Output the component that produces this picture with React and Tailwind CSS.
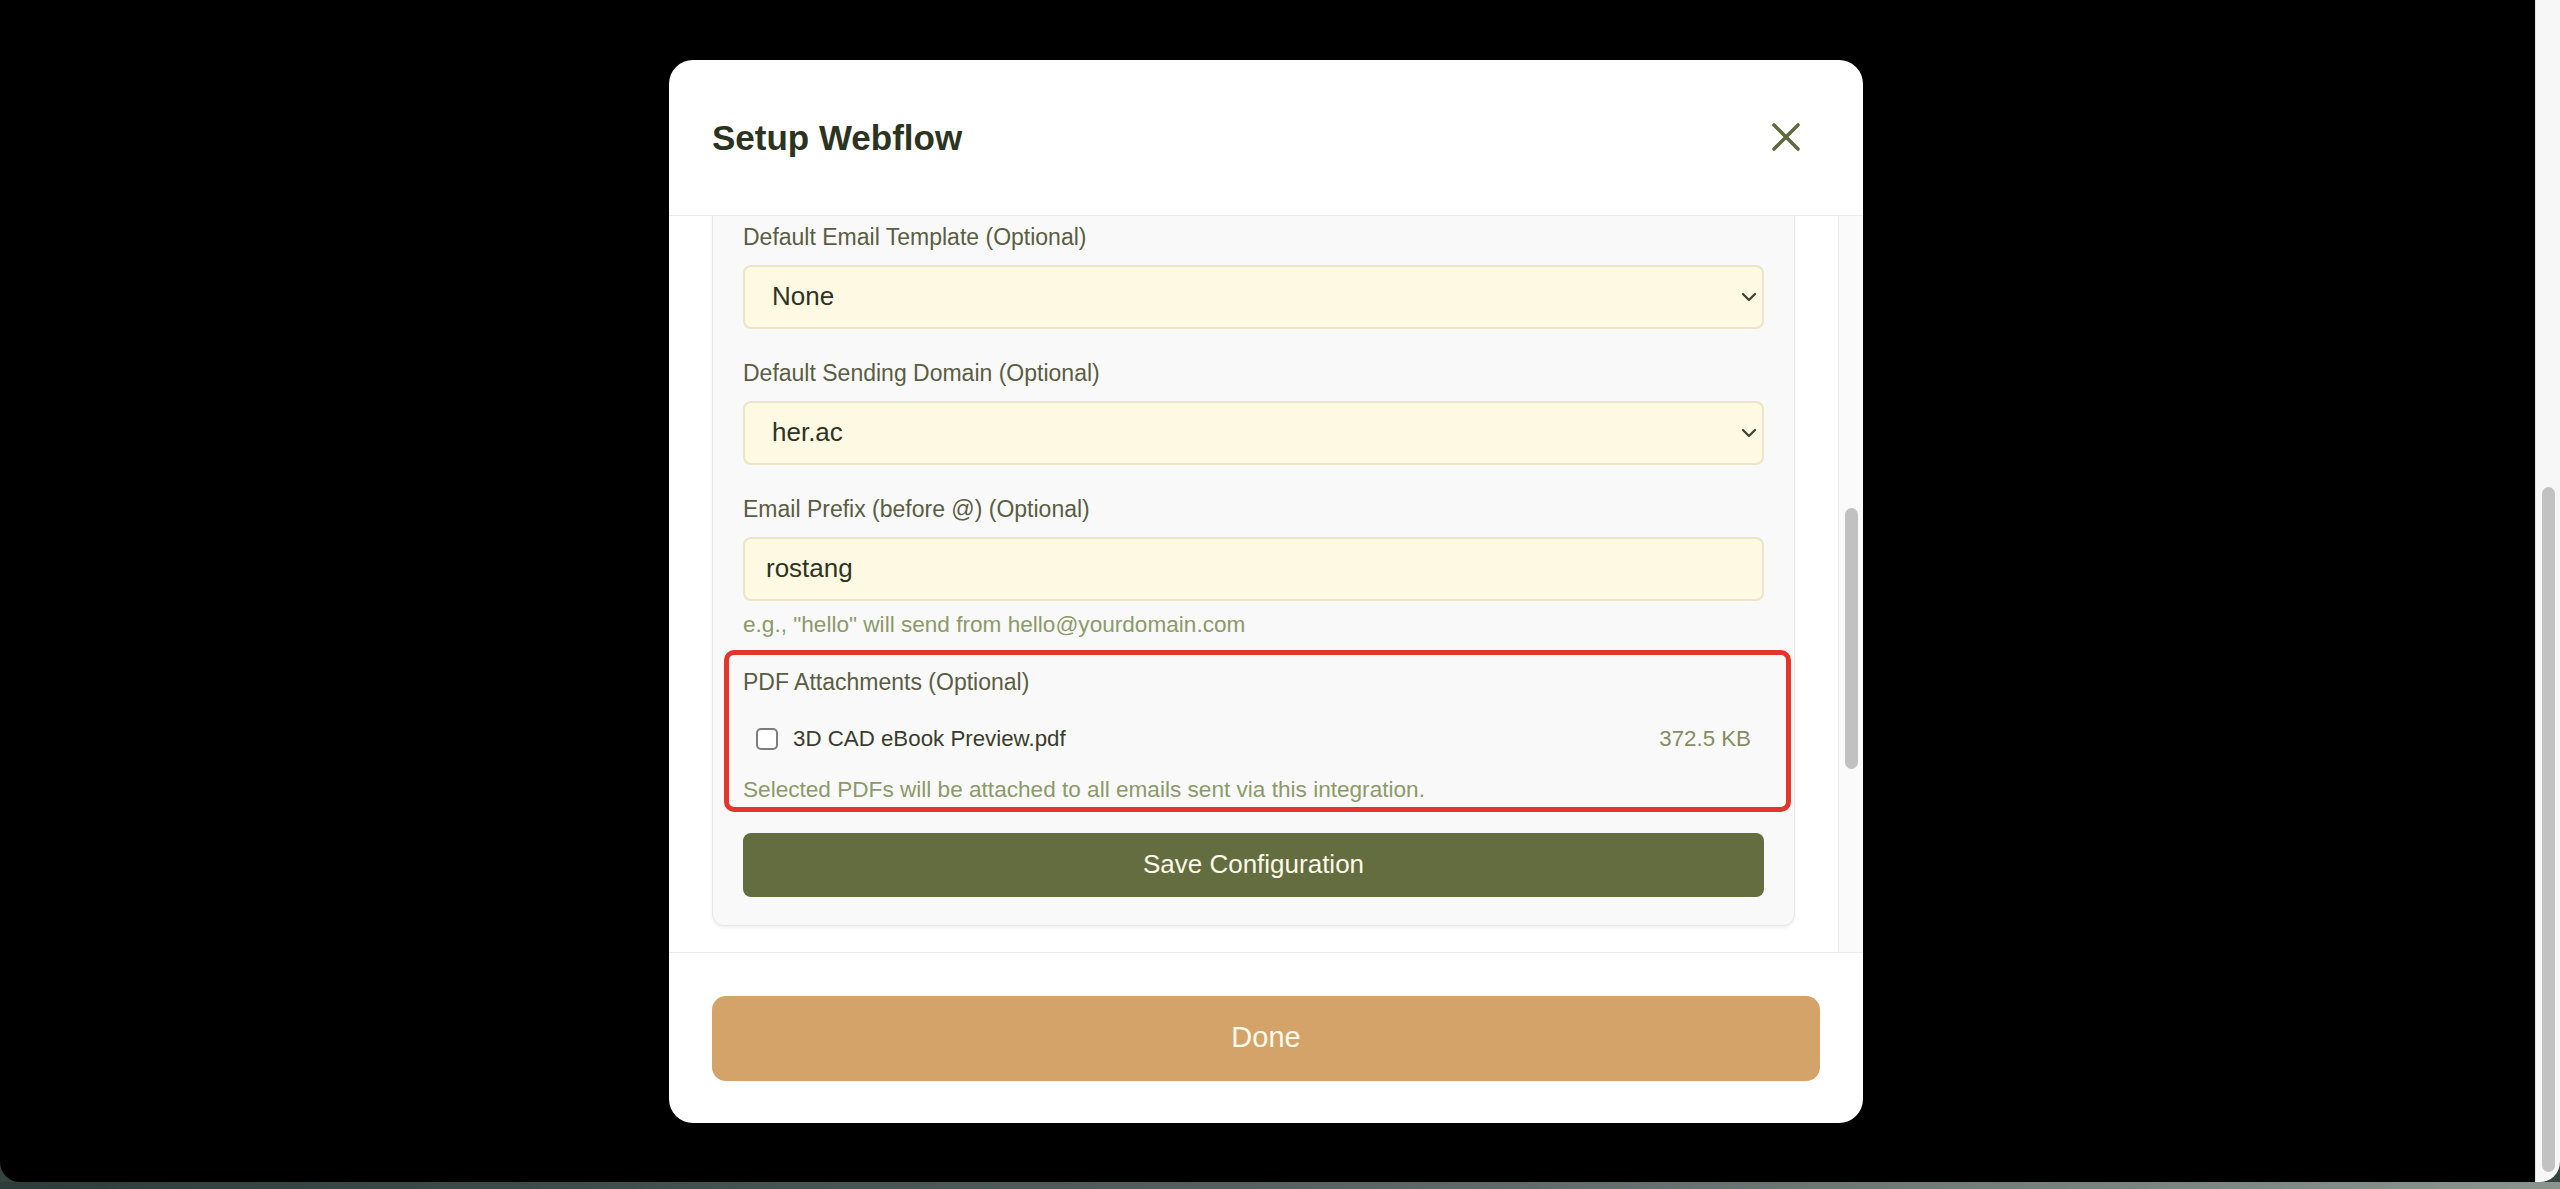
const sans = { fontFamily: '"Liberation Sans", Arial, sans-serif' };

const labelCls = "block text-[23px] font-medium leading-[32px] text-[#5a5d44]";
const hintCls = "text-[22.6px] leading-[30px] text-[#8c9a6a]";
const boxCls =
  "flex h-[64px] items-center justify-between rounded-[8px] border-2 border-[#ebe6c8] bg-[#fdf9e3] text-[26px] text-[#2f3322]";

function Chevron() {
  return (
    <svg width="16" height="10" viewBox="0 0 16 10" fill="none">
      <path d="M2 2l6 6 6-6" stroke="#3d4030" strokeWidth="2.2" strokeLinecap="round" strokeLinejoin="round" />
    </svg>
  );
}

function SelectBox({ value }) {
  return (
    <div className={`${boxCls} pl-[27px] pr-[5px]`}>
      <span>{value}</span>
      <Chevron />
    </div>
  );
}

function Field({ label, children, className = "" }) {
  return (
    <div className={`flex flex-col gap-[12px] ${className}`}>
      <label className={labelCls}>{label}</label>
      {children}
    </div>
  );
}

function SetupModal() {
  return (
    <div className="flex h-[1063px] w-[1194px] flex-col overflow-hidden rounded-[24px] bg-white">
      <div className="flex h-[156px] shrink-0 items-center justify-between border-b border-[#ececec] pl-[43px] pr-[62px]">
        <h2 className="text-[35px] font-bold leading-none text-[#2c3320]">Setup Webflow</h2>
        <svg width="30" height="30" viewBox="0 0 30 30" fill="none">
          <path d="M3 3l24 24M27 3L3 27" stroke="#5f6b3c" strokeWidth="3.6" strokeLinecap="round" />
        </svg>
      </div>

      <div className="flex min-h-0 flex-1">
        <div className="min-w-0 flex-1 overflow-hidden px-[43px] pb-[28px]">
          <div className="-mt-[20px] rounded-[12px] border border-[#e7e7e7] bg-[#f9f9f9] px-[30px] pb-[28px] pt-[24px] shadow-[0_2px_3px_rgba(0,0,0,0.06)]">
            <Field label="Default Email Template (Optional)">
              <SelectBox value="None" />
            </Field>
            <Field label="Default Sending Domain (Optional)" className="mt-[28px]">
              <SelectBox value="her.ac" />
            </Field>
            <Field label="Email Prefix (before @) (Optional)" className="mt-[28px]">
              <div className={`${boxCls} px-[21px]`}>rostang</div>
            </Field>
            <p className={`mt-[9px] ${hintCls}`}>e.g., "hello" will send from hello@yourdomain.com</p>

            <div className="-ml-[19px] -mr-[27px] mt-[10px] rounded-[10px] border-[5px] border-[#e3352c] pb-[2px] pl-[14px] pr-[22px] pt-[11px]">
              <label className={labelCls}>PDF Attachments (Optional)</label>
              <div className="mt-[19px] flex h-[44px] items-center justify-between px-[13px]">
                <div className="flex items-center gap-[15px]">
                  <span className="h-[22px] w-[22px] rounded-[5px] border-2 border-[#7d7d7d] bg-white" />
                  <span className="text-[22.3px] text-[#3a3d2e]">3D CAD eBook Preview.pdf</span>
                </div>
                <span className="text-[22.3px] text-[#858d62]">372.5 KB</span>
              </div>
              <p className={`mt-[14px] ${hintCls}`}>
                Selected PDFs will be attached to all emails sent via this integration.
              </p>
            </div>

            <button className="mt-[21px] flex h-[64px] w-full items-center justify-center rounded-[8px] bg-[#636d3f] text-[26px] font-medium text-[#fdf9e8]">
              Save Configuration
            </button>
          </div>
        </div>

        {/* inner scroll track */}
        <div className="w-[25px] shrink-0 border-l border-[#ebebeb] bg-[#fafafa] pl-[6px] pt-[292px]">
          <div className="h-[261px] w-[13px] rounded-full bg-[#c1c1c1]" />
        </div>
      </div>

      <div className="h-[171px] shrink-0 border-t border-[#ececec] px-[43px] pb-[42px] pt-[43px]">
        <button className="flex h-[85px] w-full items-center justify-center rounded-[14px] bg-[#d4a36a] text-[29px] font-medium text-[#fffbea]">
          Done
        </button>
      </div>
    </div>
  );
}

export default function App() {
  return (
    <div style={sans} className="flex h-[1189px] w-[2560px] flex-col overflow-hidden bg-[#34443f]">
      <div className="flex h-[1182px] shrink-0 overflow-hidden rounded-b-[20px] bg-black">
        <main className="flex flex-1 items-center justify-center pr-[3px]">
          <SetupModal />
        </main>
        <div className="w-[25px] shrink-0 border-l border-[#e2e2e2] bg-[#f7f7f7] pl-[6px] pt-[487px]">
          <div className="h-[685px] w-[13px] rounded-full bg-[#c2c2c2]" />
        </div>
      </div>
      <div className="h-[7px] bg-gradient-to-r from-[#2e3d3a] via-[#55625f] to-[#8a9590]" />
    </div>
  );
}
